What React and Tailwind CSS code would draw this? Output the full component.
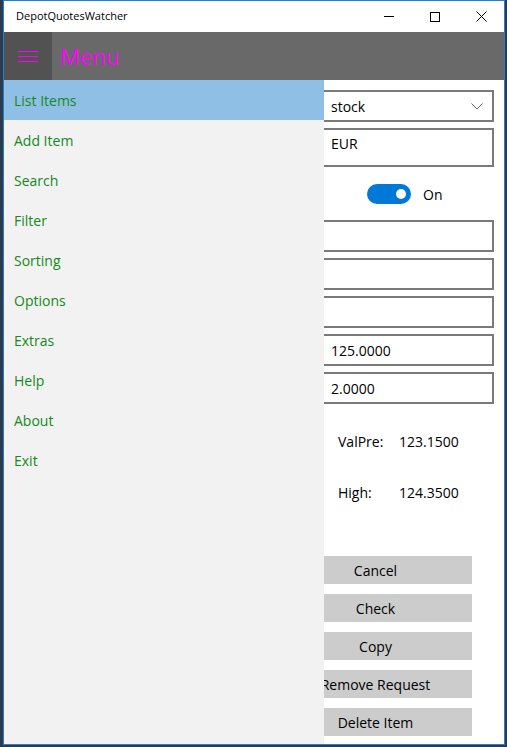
import React from "react";

const menuItems = ["List Items", "Add Item", "Search", "Filter", "Sorting", "Options", "Extras", "Help", "About", "Exit"];
const buttons = ["Cancel", "Check", "Copy", "Remove Request", "Delete Item"];

function TextBox({ value, className = "" }) {
  return (
    <div className={`h-[32px] border-2 border-[#7a7a7a] bg-white flex items-center pl-[50px] text-[14px] text-black ${className}`}>
      {value}
    </div>
  );
}

export default function App() {
  return (
    <div
      className="w-[507px] h-[747px] bg-[#2f3b4a] pl-[3px] pr-[2px] pb-[2px]"
      style={{ fontFamily: '"Open Sans", "Noto Sans", sans-serif' }}
    >
      <div className="relative h-full border border-[#1883d7] bg-white flex flex-col">
        {/* title bar */}
        <div className="h-[31px] flex items-center bg-white shrink-0">
          <span className="pl-[12px] text-[11px] text-black">DepotQuotesWatcher</span>
          <div className="ml-auto flex h-full">
            <div className="w-[46px] flex items-center justify-center">
              <div className="w-[10px] h-px bg-black" />
            </div>
            <div className="w-[46px] flex items-center justify-center">
              <div className="w-[10px] h-[10px] border border-black" />
            </div>
            <div className="w-[46px] flex items-center justify-center">
              <svg width="11" height="11" viewBox="0 0 11 11">
                <path d="M0.5 0.5 L10.5 10.5 M10.5 0.5 L0.5 10.5" stroke="#000" strokeWidth="1" />
              </svg>
            </div>
          </div>
        </div>

        {/* header */}
        <div className="h-[48px] bg-[#696969] flex shrink-0">
          <div className="w-[48px] bg-[#525252] flex flex-col justify-center gap-[4px] pl-[14px]">
            <div className="w-[20px] h-px bg-[#ff00ff]" />
            <div className="w-[20px] h-px bg-[#ff00ff]" />
            <div className="w-[20px] h-px bg-[#ff00ff]" />
          </div>
          <div className="flex items-center pl-[8px] text-[22px] text-[#ff00ff]">Menu</div>
        </div>

        {/* body */}
        <div className="relative flex-1 overflow-hidden">
          <div className="flex flex-col pl-[275px] pr-[10px] pt-[10px]">
            <div className="h-[32px] border-2 border-[#7a7a7a] flex items-center pl-[50px] pr-[9px] text-[14px] text-black">
              <span>stock</span>
              <svg className="ml-auto" width="12" height="7" viewBox="0 0 12 7">
                <path d="M0.5 0.5 L6 6 L11.5 0.5" stroke="#666" strokeWidth="1" fill="none" />
              </svg>
            </div>
            <div className="mt-[6px] h-[39px] border-2 border-[#7a7a7a] pl-[50px] pt-[3px] text-[14px] text-black">EUR</div>

            <div className="mt-[17px] h-[20px] flex items-center pl-[88px]">
              <div className="w-[44px] h-[20px] rounded-full bg-[#0078d7] flex items-center justify-end pr-[5px]">
                <div className="w-[10px] h-[10px] rounded-full bg-white" />
              </div>
              <span className="ml-[12px] text-[14px] text-black">On</span>
            </div>

            <div className="mt-[16px] flex flex-col gap-[6px]">
              <TextBox value="" />
              <TextBox value="" />
              <TextBox value="" />
              <TextBox value="125.0000" />
              <TextBox value="2.0000" />
            </div>

            <div className="mt-[27px] h-[20px] flex items-center pl-[59px] text-[14px] text-black">
              <span className="w-[61px]">ValPre:</span>
              <span>123.1500</span>
            </div>
            <div className="mt-[31px] h-[20px] flex items-center pl-[59px] text-[14px] text-black">
              <span className="w-[61px]">High:</span>
              <span>124.3500</span>
            </div>

            <div className="mt-[54px] flex flex-col gap-[10px]">
              {buttons.map((b) => (
                <div key={b} className="w-[193px] h-[28px] bg-[#cccccc] flex items-center justify-center text-[14px] text-black">
                  {b}
                </div>
              ))}
            </div>
          </div>

          {/* navigation pane */}
          <div className="absolute left-0 top-0 bottom-0 w-[320px] bg-[#f2f2f2]">
            {menuItems.map((item, i) => (
              <div
                key={item}
                className={`h-[40px] flex items-center pl-[10px] text-[14px] text-[#15891a] ${i === 0 ? "bg-[#90bfe6]" : ""}`}
              >
                {item}
              </div>
            ))}
          </div>
        </div>
      </div>
    </div>
  );
}
